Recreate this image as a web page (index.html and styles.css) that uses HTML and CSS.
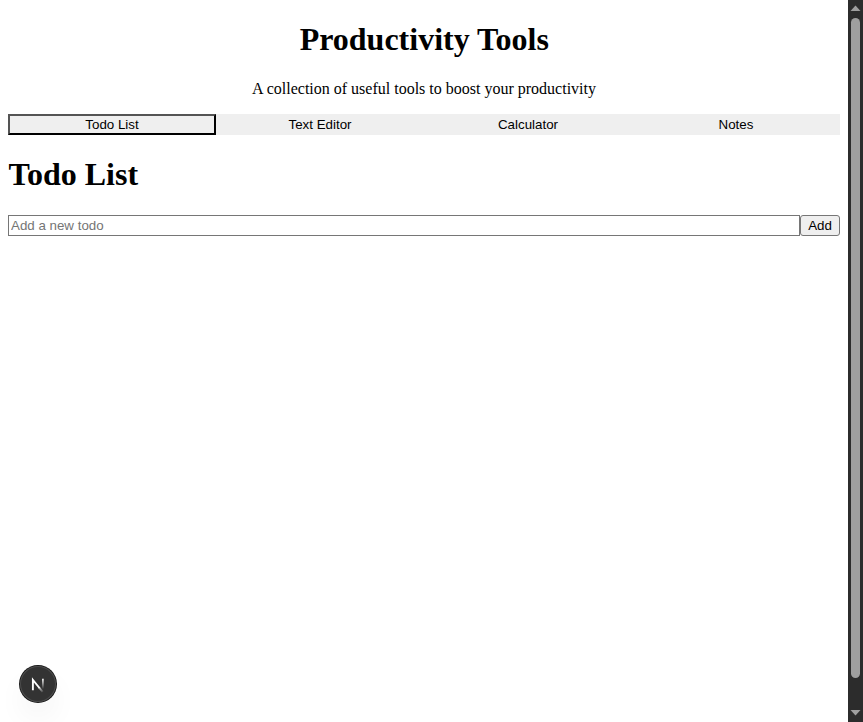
FILE: index.html
```html
<!DOCTYPE html>
<html lang="en">
<head>
<meta charset="utf-8">
<title>Productivity Tools</title>
<link rel="stylesheet" href="styles.css">
</head>
<body>
<main class="page">
  <header class="header">
    <h1>Productivity Tools</h1>
    <p>A collection of useful tools to boost your productivity</p>
  </header>
  <nav class="tabs">
    <button class="tab active">Todo List</button>
    <button class="tab">Text Editor</button>
    <button class="tab">Calculator</button>
    <button class="tab">Notes</button>
  </nav>
  <section>
    <h1>Todo List</h1>
    <form class="todo-form">
      <input class="todo-input" type="text" placeholder="Add a new todo">
      <button class="add" type="button">Add</button>
    </form>
  </section>
</main>
<aside class="scrollbar">
  <svg class="arrow" width="15" height="18" viewBox="0 0 15 18"><path d="M7.500 5.500 12.500 11h-10z" fill="#9f9f9f"/></svg>
  <div class="thumb"></div>
  <svg class="arrow" width="15" height="18" viewBox="0 0 15 18"><path d="M2.500 6h10l-5 5.500z" fill="#9f9f9f"/></svg>
</aside>
<div class="badge">
  <svg width="36" height="36" viewBox="0 0 36 36" fill="none">
    <defs>
      <linearGradient id="diag" x1="19" y1="19.500" x2="24" y2="26" gradientUnits="userSpaceOnUse"><stop stop-color="#fff"/><stop offset="1" stop-color="#fff" stop-opacity="0"/></linearGradient>
      <linearGradient id="stem" x1="23" y1="12.500" x2="23" y2="23" gradientUnits="userSpaceOnUse"><stop stop-color="#fff"/><stop offset="1" stop-color="#fff" stop-opacity="0"/></linearGradient>
    </defs>
    <path d="M12.900 24.200V14L19.500 22" stroke="#fff" stroke-width="1.900"/>
    <path d="M19 21.400 22.700 25.900" stroke="url(#diag)" stroke-width="1.900"/>
    <path d="M22.900 12.700v10.500" stroke="url(#stem)" stroke-width="1.700"/>
  </svg>
</div>
</body>
</html>
```
FILE: styles.css
```css
body {
  margin: 0;
  height: 722px;
  display: flex;
  overflow: hidden;
  background: #fff;
  color: #000;
  font-family: "Liberation Serif", serif;
  font-size: 16px;
}

.page {
  flex: 1;
  padding: 0 8px;
}

.header {
  text-align: center;
}

h1 {
  margin: 21.440px 0;
  font-size: 32px;
  line-height: 37px;
  text-indent: 0.500px;
}

.header p {
  margin: 16px 0;
  line-height: 18px;
}

.tabs {
  display: grid;
  grid-template-columns: repeat(4, 1fr);
}

.tab,
.add,
.todo-input {
  box-sizing: border-box;
  height: 21px;
  font: 13.333px "Liberation Sans", sans-serif;
}

.tab {
  padding: 1px 6px;
  border: 2px solid #efefef;
  background: #efefef;
  color: #000;
}

.tab.active {
  border: 2px outset #000;
}

.todo-form {
  display: flex;
}

.todo-input {
  flex: 1;
  padding: 1px 2px;
  border: 1px solid #767676;
  border-radius: 0;
}

.todo-input::placeholder {
  color: #757575;
}

.add {
  width: 40px;
  padding: 1px 6px;
  border: 1px solid #767676;
  border-radius: 3px;
  background: #efefef;
  color: #000;
}

.scrollbar {
  display: flex;
  flex-direction: column;
  align-items: center;
  width: 15px;
  background: #2c2c2c;
}

.arrow {
  flex: none;
}

.thumb {
  width: 9px;
  height: 660px;
  margin-bottom: 26px;
  border-radius: 4.500px;
  background: #9f9f9f;
}

.badge {
  position: absolute;
  left: 20px;
  bottom: 20px;
  width: 36px;
  height: 36px;
  border-radius: 50%;
  background: #333;
  box-shadow: 0 0 0 1px #171717, inset 0 0 0 1px #4c4c4c, 0 16px 32px -8px rgba(0, 0, 0, 0.140);
}
```
